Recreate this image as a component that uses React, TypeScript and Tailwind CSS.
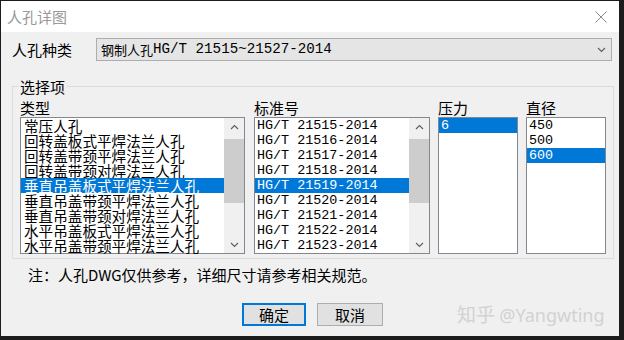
import React from 'react';

const types = [
  '常压人孔',
  '回转盖板式平焊法兰人孔',
  '回转盖带颈平焊法兰人孔',
  '回转盖带颈对焊法兰人孔',
  '垂直吊盖板式平焊法兰人孔',
  '垂直吊盖带颈平焊法兰人孔',
  '垂直吊盖带颈对焊法兰人孔',
  '水平吊盖板式平焊法兰人孔',
  '水平吊盖带颈平焊法兰人孔',
];

const standards = [15, 16, 17, 18, 19, 20, 21, 22, 23].map((n) => `HG/T 215${n}-2014`);

function Row({ text, selected, mono, pad }: { text: string; selected?: boolean; mono?: boolean; pad: string }) {
  return (
    <div
      className={`h-[15px] leading-[15px] whitespace-nowrap ${pad} ${
        selected ? 'bg-[#0078d7] text-white' : 'text-black'
      } ${mono ? "font-['Liberation_Mono',monospace] text-[13.4px]" : 'text-[14.6px]'}`}
    >
      {text}
    </div>
  );
}

function Chevron({ up }: { up?: boolean }) {
  return (
    <svg width="9" height="6" viewBox="0 0 9 6">
      <path
        d={up ? 'M1 5 L4.5 1.5 L8 5' : 'M1 1 L4.5 4.5 L8 1'}
        fill="none"
        stroke="#606060"
        strokeWidth="1.2"
      />
    </svg>
  );
}

function Scrollbar() {
  return (
    <div className="w-[20px] flex flex-col bg-[#f0f0f0]">
      <div className="h-[17px] flex items-center justify-center">
        <Chevron up />
      </div>
      <div className="flex-1">
        <div className="mt-[4px] h-[64px] bg-[#cdcdcd]" />
      </div>
      <div className="h-[17px] flex items-center justify-center">
        <Chevron />
      </div>
    </div>
  );
}

export default function App() {
  return (
    <div className="w-[624px] h-[340px] bg-[#1c1c1c] pt-[1px] pl-[1px] font-['Noto_Sans_CJK_SC',sans-serif] overflow-hidden">
      <div className="w-[618px] h-[335px] bg-[#f0f0f0] flex flex-col">
        {/* Title bar */}
        <div className="h-[31px] bg-white flex items-center justify-between pl-[6px] pr-[12px]">
          <span className="text-[15px] leading-[15px] text-[#999999]">人孔详图</span>
          <svg width="12" height="12" viewBox="0 0 12 12">
            <path d="M0.5 0.5 L11.5 11.5 M11.5 0.5 L0.5 11.5" stroke="#8a8a8a" strokeWidth="1" />
          </svg>
        </div>

        {/* Manhole kind */}
        <div className="mt-[6px] flex items-center pl-[11px]">
          <span className="w-[84px] text-[15px] leading-[15px] text-black">人孔种类</span>
          <div className="w-[516px] h-[23px] border border-[#adadad] bg-[#e5e5e5] flex items-center justify-between pl-[4px] pr-[5px]">
            <span className="whitespace-nowrap flex items-center">
              <span className="text-[13px] leading-[15px] text-black">钢制人孔</span>
              <span className="font-['Liberation_Mono',monospace] text-[14.2px] leading-[15px] text-black">
                HG/T 21515~21527-2014
              </span>
            </span>
            <Chevron />
          </div>
        </div>

        {/* Options group */}
        <fieldset className="mt-[18px] ml-[11px] w-[602px] border border-[#dcdcdc] px-[7px] pb-[4px]">
          <legend className="ml-[-2px] px-[2px] text-[15px] leading-[15px] text-black">选择项</legend>
          <div className="mt-[6px] flex gap-[8px]">
            <div className="flex flex-col w-[225px]">
              <span className="h-[15px] leading-[15px] text-[15px] mb-[2px]">类型</span>
              <div className="h-[137px] border border-[#828790] bg-white flex">
                <div className="flex-1 flex flex-col">
                  {types.map((t, i) => (
                    <Row key={t} text={t} selected={i === 4} pad="pl-[3px]" />
                  ))}
                </div>
                <Scrollbar />
              </div>
            </div>
            <div className="flex flex-col w-[176px] ml-[1px]">
              <span className="h-[15px] leading-[15px] text-[15px] mb-[2px]">标准号</span>
              <div className="h-[137px] border border-[#828790] bg-white flex">
                <div className="flex-1 flex flex-col">
                  {standards.map((t, i) => (
                    <Row key={t} text={t} selected={i === 4} mono pad="pl-[2px]" />
                  ))}
                </div>
                <Scrollbar />
              </div>
            </div>
            <div className="flex flex-col w-[80px]">
              <span className="h-[15px] leading-[15px] text-[15px] mb-[2px]">压力</span>
              <div className="h-[137px] border border-[#828790] bg-white flex flex-col">
                <Row text="6" selected mono pad="pl-[2px]" />
              </div>
            </div>
            <div className="flex flex-col w-[80px]">
              <span className="h-[15px] leading-[15px] text-[15px] mb-[2px]">直径</span>
              <div className="h-[137px] border border-[#828790] bg-white flex flex-col">
                <Row text="450" mono pad="pl-[2px]" />
                <Row text="500" mono pad="pl-[2px]" />
                <Row text="600" selected mono pad="pl-[2px]" />
              </div>
            </div>
          </div>
        </fieldset>

        {/* Note */}
        <div className="mt-[8px] pl-[27px] text-[15px] leading-[15px] text-black whitespace-nowrap">
          注：人孔DWG仅供参考，详细尺寸请参考相关规范。
        </div>

        {/* Buttons */}
        <div className="mt-[21px] flex items-center">
          <button className="ml-[241px] w-[64px] h-[23px] border-2 border-[#0078d7] bg-[#e1e1e1] text-[15px] leading-[15px] text-black">
            确定
          </button>
          <button className="ml-[11px] w-[66px] h-[23px] border border-[#adadad] bg-[#e1e1e1] text-[15px] leading-[15px] text-black">
            取消
          </button>
          <span className="ml-[74px] text-[19px] leading-[19px] text-[#d2d2d2] whitespace-nowrap">
            知乎 <span className="font-['Noto_Sans',sans-serif] text-[18px]">@Yangwting</span>
          </span>
        </div>
      </div>
    </div>
  );
}
